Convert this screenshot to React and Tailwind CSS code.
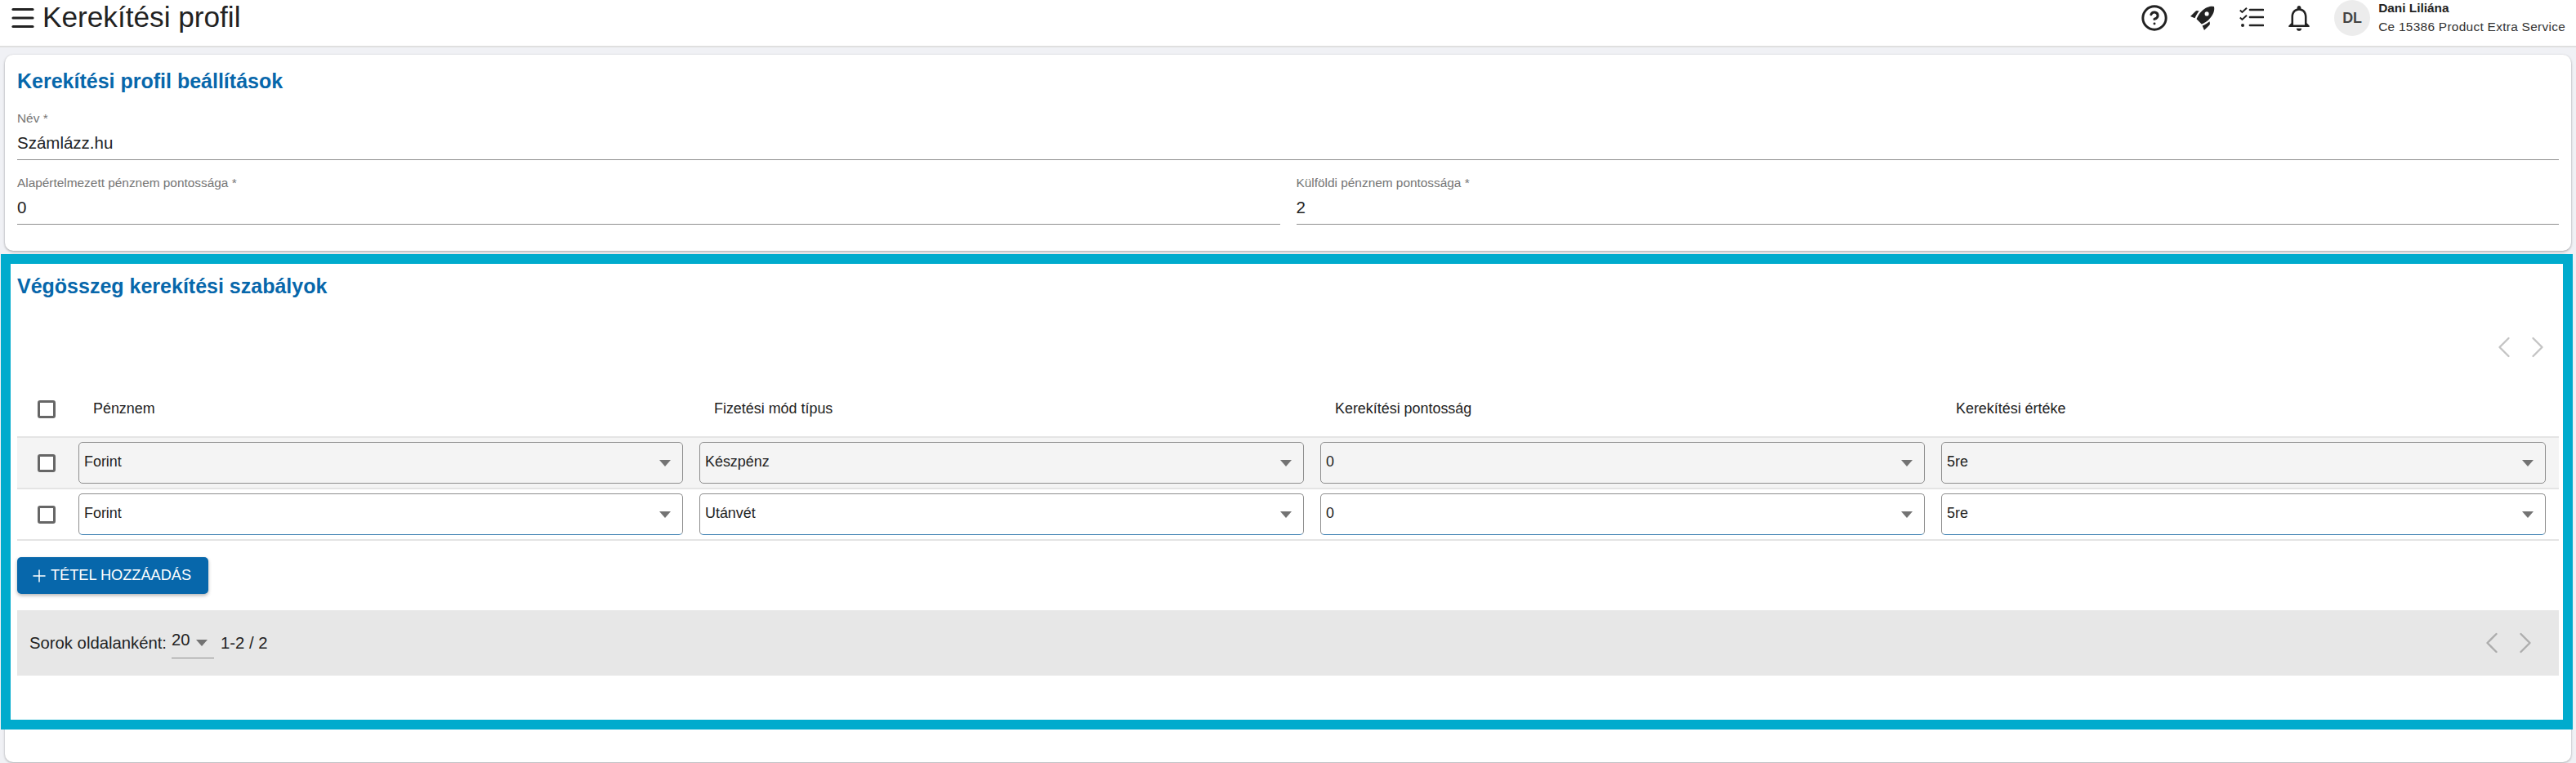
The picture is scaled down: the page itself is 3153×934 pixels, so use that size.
import React from "react";
import { ChevronLeft, ChevronRight, CircleHelp, Menu, Plus } from "lucide-react";

const font = "font-['Liberation_Sans',Arial,sans-serif]";

function RocketIcon({ className = "" }) {
  return (
    <svg viewBox="0 0 24 24" width="36" height="36" className={className}>
      <path
        fill="#222"
        d="M9.19 6.35c-2.04 2.29-3.44 5.58-3.57 5.89L2 10.69l4.05-4.05c.47-.47 1.15-.68 1.81-.55l1.33.26zM17.65 14.81c-2.29 2.04-5.58 3.44-5.89 3.57L13.31 22l4.05-4.05c.47-.47.68-1.15.55-1.81l-.26-1.33zM11.17 17s3.74-1.55 5.89-3.7c5.4-5.4 4.5-9.62 4.21-10.57-.95-.3-5.17-1.19-10.57 4.21C8.55 9.09 7 12.83 7 12.83L11.17 17z"
      />
      <circle cx="15.4" cy="8.6" r="1.7" fill="#fff" />
    </svg>
  );
}

function ChecklistIcon({ className = "" }) {
  return (
    <svg viewBox="0 0 30 26" width="30" height="26" fill="none" stroke="#222" className={className}>
      <path d="M.8 3.6 3.4 6 9 .8M.8 12.6 3.4 15 9 9.8" strokeWidth="2" />
      <circle cx="4" cy="22" r="2" fill="#222" stroke="none" />
      <path d="M13 3h16M13 12h16M13 22h16" strokeWidth="2.7" strokeLinecap="round" />
    </svg>
  );
}

function BellIcon({ className = "" }) {
  return (
    <svg viewBox="0 0 24 24" width="38" height="38" className={className}>
      <path
        fill="#222"
        d="M12 22c1.1 0 2-.9 2-2h-4c0 1.1.9 2 2 2zm6-6v-5c0-3.07-1.63-5.64-4.5-6.32V4c0-.83-.67-1.5-1.5-1.5s-1.5.67-1.5 1.5v.68C7.64 5.36 6 7.92 6 11v5l-2 2v1h16v-1l-2-2zm-1.6 1.4H7.6V11c0-2.6 1.7-4.9 4.4-4.9s4.4 2.3 4.4 4.9v6.4z"
      />
    </svg>
  );
}

function Field({ label, value, className = "" }) {
  return (
    <div className={`border-b border-[#8f8f8f] h-[61px] ${className}`}>
      <div className="text-[15.4px] leading-[20px] text-[#757575]">{label}</div>
      <div className="text-[20.5px] leading-[28px] mt-[6px] text-[#222]">{value}</div>
    </div>
  );
}

function Box() {
  return <div className="w-[22px] h-[22px] rounded-[3px] border-[3px] border-[#666] bg-white" />;
}

function Select({ value, active }) {
  return (
    <div
      className={`h-[51px] flex items-center justify-between rounded-[5px] border border-[#8e8e8e] pl-[6px] pr-[14px] ${
        active ? "border-b-[#2f77ad] bg-white" : "bg-[#f4f4f4]"
      }`}
    >
      <span className="text-[17.92px] text-[#222] -mt-[2px]">{value}</span>
      <span className="w-0 h-0 border-x-[7px] border-x-transparent border-t-[8px] border-t-[#737373]" />
    </div>
  );
}

function Row({ values, active }) {
  return (
    <div
      className={`grid grid-cols-[65px_repeat(4,760px)] h-[63px] items-center border-b-2 border-[#e4e4e4] ${
        active ? "" : "bg-[#f4f4f4]"
      }`}
    >
      <div className="flex justify-start pl-[25px]">
        <Box />
      </div>
      {values.map((v, i) => (
        <div key={i} className="px-[10px]">
          <Select value={v} active={active} />
        </div>
      ))}
    </div>
  );
}

function Arrows({ color, className = "" }) {
  return (
    <div className={`flex gap-0 -space-x-[3px] ${className}`} style={{ color }}>
      <ChevronLeft size={44} strokeWidth={1.3} />
      <ChevronRight size={44} strokeWidth={1.3} />
    </div>
  );
}

export default function App() {
  return (
    <div className={`${font} w-[3153px] h-[934px] overflow-hidden bg-[#f0f1f5] flex flex-col`}>
      <header className="h-[58px] bg-white border-b-2 border-[#dfdfdf] flex justify-between pl-[10px] pr-[13px]">
        <div className="h-[44px] flex items-center gap-[6px]">
          <Menu size={36} strokeWidth={2.1} className="text-[#222]" />
          <h1 className="text-[35.2px] leading-[40px] text-[#222] -mt-[2px]">Kerekítési profil</h1>
        </div>
        <div className="h-[44px] flex items-center">
          <CircleHelp size={34} strokeWidth={2.1} className="text-[#222]" />
          <RocketIcon className="ml-[24px]" />
          <ChecklistIcon className="ml-[27px]" />
          <BellIcon className="ml-[24px]" />
          <div className="w-[44px] h-[44px] rounded-full bg-[#ececec] ml-[24px] flex items-center justify-center text-[17.9px] font-bold text-[#444]">
            DL
          </div>
          <div className="ml-[10px] self-start">
            <div className="text-[15.4px] leading-[20px] font-bold text-[#222]">Dani Liliána</div>
            <div className="text-[15.4px] leading-[24px] mt-[1px] tracking-[0.3px] text-[#333]">Ce 15386 Product Extra Service</div>
          </div>
        </div>
      </header>

      <main className="flex-1 px-[6px] pt-[9px] pb-[1px] flex flex-col gap-[4px]">
        <section className="h-[240px] bg-white rounded-[10px] shadow-[0_1px_3px_rgba(0,0,0,0.35)] px-[15px] pt-[17px]">
          <h2 className="text-[25px] leading-[30px] font-bold text-[#0767ab]">Kerekítési profil beállítások</h2>
          <Field label="Név *" value="Számlázz.hu" className="mt-[21px]" />
          <div className="grid grid-cols-2 gap-x-[20px] mt-[18px]">
            <Field label="Alapértelmezett pénznem pontossága *" value="0" />
            <Field label="Külföldi pénznem pontossága *" value="2" />
          </div>
        </section>

        <section className="flex-1 bg-white rounded-[10px] shadow-[0_1px_3px_rgba(0,0,0,0.3)]">
          <div className="-ml-[5px] -mr-[2px] h-[582px] border-[12px] border-[#00abcd] bg-white pl-[8px] pr-[5px] pt-[12px]">
            <h2 className="text-[25px] leading-[30px] font-bold text-[#0767ab]">Végösszeg kerekítési szabályok</h2>
            <Arrows color="#c4c4c4" className="justify-end mr-[4px] mt-[38px]" />
            <div className="grid grid-cols-[65px_repeat(4,760px)] h-[89px] items-center border-b-2 border-[#e4e4e4] pt-[20px]">
              <div className="flex justify-start pl-[25px]">
                <Box />
              </div>
              {["Pénznem", "Fizetési mód típus", "Kerekítési pontosság", "Kerekítési értéke"].map((t) => (
                <div key={t} className="pl-[28px] text-[17.92px] text-[#222]">
                  {t}
                </div>
              ))}
            </div>
            <Row values={["Forint", "Készpénz", "0", "5re"]} />
            <Row values={["Forint", "Utánvét", "0", "5re"]} active />
            <button className="mt-[20px] h-[45px] w-[234px] pl-[15px] bg-[#0767ab] rounded-[5px] shadow-[0_2px_4px_rgba(0,0,0,0.3)] text-white text-[18.2px] flex items-center justify-start gap-[2px]">
              <Plus size={24} strokeWidth={1.5} />
              TÉTEL HOZZÁADÁS
            </button>
            <div className="mt-[20px] h-[80px] bg-[#e7e7e7] flex items-center justify-between pl-[15px] pr-[19px] text-[20.3px] text-[#222]">
              <div className="flex items-center">
                <span>Sorok oldalanként:</span>
                <span className="ml-[6px] mt-[2px] w-[52px] h-[36px] border-b border-[#8e8e8e] flex items-start justify-between pr-[8px]">
                  <span className="leading-[28px] -mt-[1px]">20</span>
                  <span className="mt-[13px] w-0 h-0 border-x-[7px] border-x-transparent border-t-[8px] border-t-[#737373]" />
                </span>
                <span className="ml-[8px]">1-2 / 2</span>
              </div>
              <Arrows color="#adadad" />
            </div>
          </div>
        </section>
      </main>
    </div>
  );
}
